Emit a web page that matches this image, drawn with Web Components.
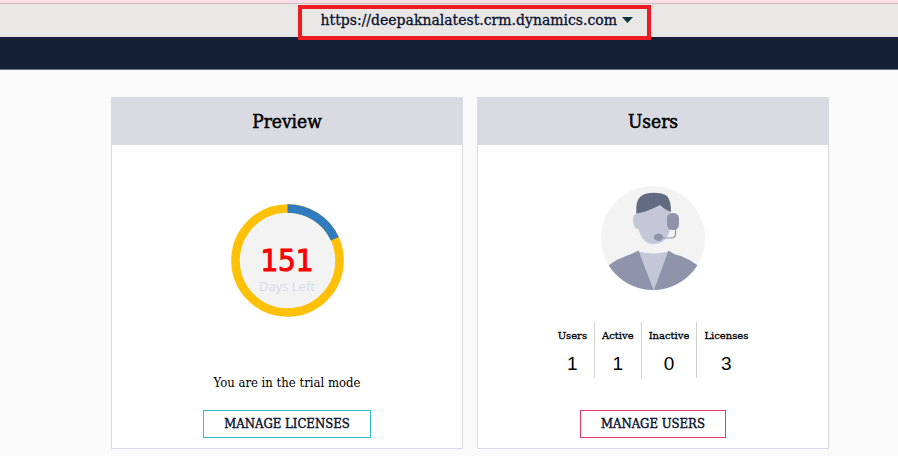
<!DOCTYPE html>
<html lang="en">
<head>
<meta charset="utf-8">
<title>Licenses and users</title>
<style>
  html, body { margin: 0; background: #fafafa; }
  body { font-family: "DejaVu Serif Condensed", "DejaVu Serif", serif; color: #000; }
</style>
</head>
<body>
<admin-page></admin-page>
<script>
const define = (name, html, init) => customElements.define(name, class extends HTMLElement {
  constructor() {
    super();
    this.attachShadow({ mode: "open" }).innerHTML = html;
  }
  connectedCallback() { if (init) init(this, this.shadowRoot); }
});

define("org-picker", `
<style>
  :host { display: block; position: relative; z-index: 1; border: 4px solid #ed1c24; background: #e9e7e5; box-sizing: border-box; height: 35px; }
  select { appearance: none; display: block; box-sizing: border-box; height: 22px; border: 0; margin: 0; padding: 0 29px 0 19px; background: transparent; color: #091130; font: 14px/22px "DejaVu Serif", serif; -webkit-text-stroke: 0.3px #091130; }
  svg { position: absolute; right: 14px; top: 8px; pointer-events: none; }
</style>
<select aria-label="Organization"><option>https://deepaknalatest.crm.dynamics.com</option></select>
<svg width="11" height="6" viewBox="0 0 11 6" aria-hidden="true"><path d="M0 0H11L5.5 6Z" fill="#083540"/></svg>`);

define("top-bar", `
<style>
  :host { display: block; }
  .strip { height: 3px; background: #ffdfe7; border-bottom: 1px solid #cdbcc0; }
  .picker { display: flex; justify-content: center; align-items: flex-start; box-sizing: border-box; height: 33px; padding: 1px 0 0 50px; background: #e9e7e5; }
  .nav { height: 32px; background: #151f38; border-bottom: 1px solid #6c7384; }
</style>
<div class="strip"></div>
<div class="picker"><slot></slot></div>
<div class="nav"></div>`);

define("info-card", `
<style>
  :host { display: flex; flex-direction: column; border: 1px solid #dadae2; background: #fff; min-width: 0; }
  h2 { margin: 0; background: #dadae2; text-align: center; font-size: 19px; line-height: 47px; font-weight: 400; -webkit-text-stroke: 0.5px #000; }
  .body { flex: 1; display: flex; flex-direction: column; align-items: center; padding: 41px 0 10px; }
  .foot { margin-top: auto; display: flex; flex-direction: column; align-items: center; }
</style>
<h2></h2>
<div class="body"><slot></slot><div class="foot"><slot name="foot"></slot></div></div>`,
(el, root) => { root.querySelector("h2").textContent = el.getAttribute("heading"); });

define("outline-button", `
<style>
  :host { display: block; }
  button { display: block; box-sizing: border-box; height: 28px; border: 1px solid var(--edge); border-radius: 0; background: #fff; color: #091130; padding: 0 20px; font: 13px/24px "DejaVu Serif Condensed", "DejaVu Serif", serif; -webkit-text-stroke: 0.4px #091130; }
</style>
<button type="button"><slot></slot></button>`);

define("days-gauge", `
<style>
  :host { display: grid; width: 113px; height: 113px; margin-top: 18px; }
  svg, .label { grid-area: 1 / 1; }
  .label { display: flex; flex-direction: column; align-items: center; padding-top: 38px; }
  .days { font: 31px/36px "DejaVu Sans Condensed", "DejaVu Sans", sans-serif; color: #f00; -webkit-text-stroke: 1px #f00; }
  .unit { font: 13px/17px "Open Sans", sans-serif; color: #dadae2; }
</style>
<svg width="113" height="113" viewBox="0 0 113 113" aria-hidden="true">
  <circle cx="56.5" cy="56.5" r="52" fill="#f3f3f3" stroke="#ffc107" stroke-width="8.6"/>
  <path d="M56.5 4.5A52 52 0 0 1 103.8 34.8" fill="none" stroke="#2f7bbd" stroke-width="8.6"/>
</svg>
<div class="label"><span class="days">151</span><span class="unit">Days Left</span></div>`);

define("agent-avatar", `
<style>:host { display: block; } svg { display: block; }</style>
<svg width="104" height="104" viewBox="0 0 104 104" role="img" aria-label="Support agent">
  <defs><clipPath id="disc"><circle cx="52" cy="52" r="52"/></clipPath></defs>
  <circle cx="52" cy="52" r="52" fill="#f3f3f3"/>
  <g clip-path="url(#disc)">
    <path d="M37.5 65.5Q52 69.500 68 65.500L62 104H44Z" fill="#c4c7d7"/>
    <path d="M0 84L8 79Q16 73 25 70Q31 68 37.500 64.500L52.500 104H0Z" fill="#9094aa"/>
    <path d="M104 84L96 79Q88 73 80 70Q74 69 67.500 64.500L53 104H104Z" fill="#9094aa"/>
  </g>
  <path d="M35 27L59 17L70 25V40Q68 51 61 56Q57 58 52 58Q46 58 42 53Q39 49 37.500 43.500Q33 43 32 35Q31.500 29 35 28Z" fill="#c4c7d7"/>
  <path d="M35.300 27.500V21Q36 8 49 7Q60 6 66 10Q70 14 70 25.500Q67 26 59 19Q46 26 35.300 27.500Z" fill="#636b82"/>
  <rect x="66" y="27" width="12" height="17" rx="5.500" fill="#9094aa"/>
  <path d="M74.500 43V47Q75 51.500 71 52H58" fill="none" stroke="#9094aa" stroke-width="1.200"/>
  <ellipse cx="57.500" cy="51.300" rx="4.700" ry="3.700" fill="#9094aa"/>
</svg>`);

define("user-stats", `
<style>
  :host { display: block; }
  table { border-collapse: collapse; }
  th, td { box-sizing: border-box; padding: 0 7px; text-align: center; height: 28px; border-left: 1px solid #d0d0d4; }
  th:first-child, td:first-child { border-left: 0; }
  th { font: 10px/28px "DejaVu Serif", serif; -webkit-text-stroke: 0.3px #000; }
  td { font: 19px/28px "Liberation Sans", Arial, sans-serif; }
</style>
<table>
  <thead><tr><th scope="col">Users</th><th scope="col">Active</th><th scope="col">Inactive</th><th scope="col">Licenses</th></tr></thead>
  <tbody><tr><td>1</td><td>1</td><td>0</td><td>3</td></tr></tbody>
</table>`);

define("admin-page", `
<style>
  :host { display: block; }
  main { display: grid; grid-template-columns: 1fr 1fr; gap: 14px; padding: 27px 69px 7px 111px; }
  info-card { min-height: 350px; }
  p { margin: 0 0 17px; font-size: 13px; line-height: 20px; }
  user-stats { margin-bottom: 32px; }
</style>
<top-bar><org-picker></org-picker></top-bar>
<main>
  <info-card heading="Preview">
    <days-gauge></days-gauge>
    <p slot="foot">You are in the trial mode</p>
    <outline-button slot="foot" style="--edge:#2dbdcb">MANAGE LICENSES</outline-button>
  </info-card>
  <info-card heading="Users">
    <agent-avatar></agent-avatar>
    <user-stats slot="foot"></user-stats>
    <outline-button slot="foot" style="--edge:#e63b62">MANAGE USERS</outline-button>
  </info-card>
</main>`);
</script>
</body>
</html>
